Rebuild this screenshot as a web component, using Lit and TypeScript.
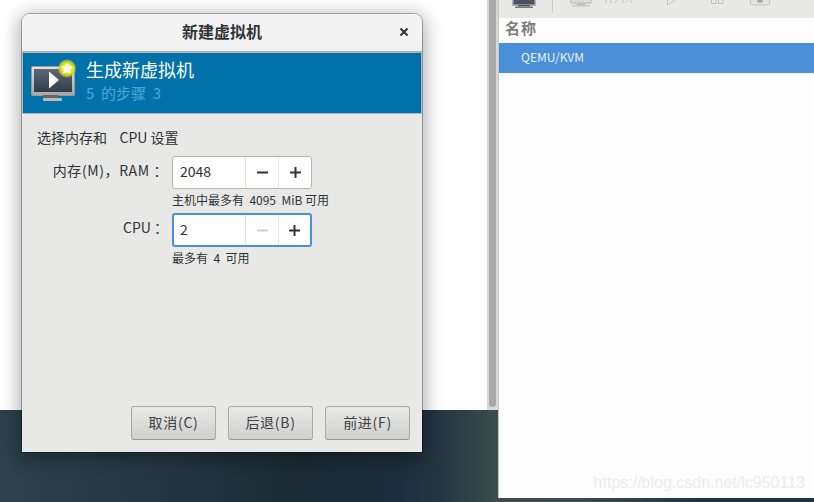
import { LitElement, html, css, svg } from "lit";
import { customElement } from "lit/decorators.js";

@customElement("app-root")
export class AppRoot extends LitElement {
  static styles = css`
    :host {
      display: block;
      position: relative;
      width: 814px;
      height: 502px;
      overflow: hidden;
      background: linear-gradient(90deg, #2c414b 0, #263842 140px, #1c2a33 300px, #1c2e3c 400px, #253640 440px, #3d4c4d 498px, #3a4c4e 580px, #1e3448 700px, #1e3448 814px);
      font-family: "Noto Sans CJK SC", "Noto Sans", sans-serif;
      color: #2e3436;
    }
    .backdrop {
      position: absolute;
      left: 0; top: 0;
      width: 487px; height: 410px;
      background: #fff;
    }
    .scroll {
      position: absolute;
      left: 487px; top: 0;
      width: 11px; height: 410px;
      background: #d8d8d6;
    }
    .thumb { position: absolute; left: 2px; top: 0; width: 7px; height: 407px; background: #a9a9a7; border-radius: 0 0 4px 4px; }
    .win {
      position: absolute;
      left: 498px; top: 0;
      width: 316px; height: 498px;
      background: #fdfdfd;
      border-left: 1px solid #c8c8c6;
      box-sizing: border-box;
      display: flex;
      flex-direction: column;
    }
    .toolbar {
      height: 18px;
      background: #e8e8e6;
      flex: none;
      position: relative;
      overflow: hidden;
    }
    .toolbar svg { position: absolute; left: 0; top: 0; }
    .colhead {
      height: 25px;
      flex: none;
      box-sizing: border-box;
      padding: 0 0 0 6px;
      font-weight: bold;
      font-size: 15px;
      line-height: 20px;
      color: #7d7d7d;
      letter-spacing: 1px;
    }
    .sel {
      height: 30px;
      flex: none;
      background: #4a90d9;
      color: #e8f0fa;
      font-size: 12px;
      line-height: 28px;
      padding-left: 22px;
    }
    .mark {
      position: absolute;
      right: 9px; top: 474px;
      font: 16px "Liberation Sans", sans-serif;
      color: #ececec;
    }
    .dialog {
      position: absolute;
      left: 22px; top: 14px;
      width: 400px; height: 438px;
      box-sizing: border-box;
      background: #e8e8e6;
      border-radius: 8px 8px 0 0;
      box-shadow: 0 0 0 1px rgba(0,0,0,.28), 0 4px 18px 3px rgba(0,0,0,.33);
      display: flex;
      flex-direction: column;
      overflow: hidden;
    }
    .title {
      height: 38px;
      flex: none;
      background: linear-gradient(#f5f5f5, #f1f1f1);
      border-bottom: 1px solid #b1b1af;
      box-sizing: border-box;
      display: flex;
      align-items: center;
      justify-content: center;
      position: relative;
      font-weight: bold;
      font-size: 16px;
      color: #2e3436;
      padding-bottom: 4px;
    }
    .close { position: absolute; left: 376px; top: 12px; width: 12px; height: 12px; }
    .banner {
      height: 62px;
      flex: none;
      background: #0072a9;
      border: 1px solid #a9b6bc;
      box-sizing: border-box;
      display: flex;
      padding: 4px 0 0 8px;
      gap: 10px;
    }
    .banner svg { flex: none; margin-top: 2px; }
    .b1 { font-size: 18px; line-height: 24px; color: #fff; }
    .b2 { font-size: 15px; line-height: 20px; color: #50a8d8; margin-top: 2px; }
    .body {
      flex: 1;
      padding: 13px 15px 0;
      display: flex;
      flex-direction: column;
      font-size: 14px;
      min-height: 0;
    }
    .lead { line-height: 20px; height: 29px; color: #2e3436; white-space: nowrap; }
    .grid {
      display: grid;
      grid-template-columns: 131px auto;
      column-gap: 4px;
      justify-content: start;
    }
    .lab { text-align: right; line-height: 28px; color: #2e3436; white-space: nowrap; }
    .lab.wide { letter-spacing: 0.6px; }
    .spin {
      width: 140px; height: 33px;
      box-sizing: border-box;
      background: #fff;
      border: 1px solid #b6b6b3;
      border-radius: 3px;
      display: flex;
    }
    .spin.focus { border: 2px solid #4a90d9; height: 34px; }
    .val { flex: 1; padding-left: 7px; line-height: 28px; font-size: 14px; color: #2e3436; }
    .spin.focus .val { padding-left: 6px; }
    .step {
      width: 33px;
      box-sizing: border-box;
      flex: none;
      border-left: 1px solid #e4e4e2;
      display: flex;
      align-items: center;
      justify-content: center;
    }
    .spin.focus .step:last-child { width: 32px; }
    .hint { grid-column: 2; font-size: 12px; height: 24px; line-height: 16px; padding-top: 3px; box-sizing: border-box; white-space: nowrap; color: #2e3436; }
    .actions {
      flex: none;
      height: 46px;
      display: flex;
      justify-content: flex-end;
      gap: 12px;
      padding-right: 12px;
    }
    .btn {
      width: 85px; height: 34px;
      box-sizing: border-box;
      border: 1px solid #a9a9a6;
      border-bottom-color: #959593;
      border-radius: 3px;
      background: linear-gradient(#e9e9e7, #cfcfcd);
      font-size: 14px;
      line-height: 28px;
      letter-spacing: 0.7px;
      text-align: center;
      color: #3c4244;
      padding: 0 0 2px;
      font-family: inherit;
    }
  `;

  private sign(plus: boolean, color: string) {
    return html`<svg width="11" height="11" viewBox="0 0 11 11">
      <rect x="0" y="4.5" width="11" height="2" fill="${color}"></rect>
      ${plus ? svg`<rect x="4.5" y="0" width="2" height="11" fill="${color}"></rect>` : ""}
    </svg>`;
  }

  render() {
    return html`
      <div class="backdrop"></div>
      <div class="scroll"><div class="thumb"></div></div>
      <div class="win">
        <div class="toolbar">
          <svg width="316" height="18" viewBox="499 0 316 18">
            <rect x="513" y="-6" width="22" height="11" fill="#4a5460" stroke="#9a9a98" stroke-width="1.5"></rect>
            <rect x="518" y="5" width="12" height="1.5" fill="#555"></rect>
            <rect x="515" y="6.5" width="18" height="1.5" fill="#777"></rect>
            <line x1="552.5" y1="0" x2="552.5" y2="13" stroke="#c9c9c7"></line>
            <rect x="571" y="-6" width="20" height="9" fill="#dcdcda" stroke="#c4c4c2" stroke-width="1.5"></rect>
            <rect x="577" y="3.5" width="8" height="1.5" fill="#bbb"></rect>
            <rect x="572" y="5" width="18" height="1.5" fill="#c8c8c6"></rect>
            <path d="M606 0v3M611 0v3M617 0l-2 3M623 0v3M628 0l-3 3M631 0v3" stroke="#c4c4c2" stroke-width="1" fill="none"></path>
            <path d="M667.5 0v5l8-5" stroke="#c2c2c0" fill="none"></path>
            <path d="M711.5 0v3.5h4.5V0M718.5 0v3.5h4.5V0" stroke="#bdbdbb" fill="none"></path>
            <rect x="750.5" y="-5" width="19" height="10" rx="1" fill="#e2e2e0" stroke="#c6c6c4"></rect>
            <path d="M757 0a3 3 0 0 0 6 0z" fill="#aaa"></path>
          </svg>
        </div>
        <div class="colhead">名称</div>
        <div class="sel">QEMU/KVM</div>
        <div class="mark">https://blog.csdn.net/lc950113</div>
      </div>

      <div class="dialog">
        <div class="title">新建虚拟机
          <svg class="close" viewBox="0 0 12 12"><path d="M2.5 2.5l7 7M9.5 2.5l-7 7" stroke="#2e3436" stroke-width="2"></path></svg>
        </div>
        <div class="banner">
          <svg width="45" height="42" viewBox="0 0 45 42">
            <defs>
              <linearGradient id="scr" x1="0" y1="0" x2="0" y2="1"><stop offset="0" stop-color="#5b6878"></stop><stop offset="1" stop-color="#333c48"></stop></linearGradient>
              <linearGradient id="bez" x1="0" y1="0" x2="0" y2="1"><stop offset="0" stop-color="#e2e2e0"></stop><stop offset="1" stop-color="#a5a5a3"></stop></linearGradient>
              <radialGradient id="glow"><stop offset="0.45" stop-color="#f2f23c"></stop><stop offset="0.8" stop-color="#c8d020" stop-opacity=".85"></stop><stop offset="1" stop-color="#c8d020" stop-opacity="0"></stop></radialGradient>
            </defs>
            <rect x="0.5" y="7.5" width="43" height="29" rx="1" fill="url(#bez)" stroke="#9a9a98"></rect>
            <rect x="3" y="10" width="38" height="23" fill="url(#scr)"></rect>
            <rect x="12" y="36" width="15" height="3" fill="#666"></rect>
            <rect x="12" y="39" width="19" height="3" rx="1" fill="#b9b9b7"></rect>
            <path d="M18 12.5l10 8.5-10 8.5z" fill="#fff"></path>
            <circle cx="36" cy="9.5" r="9.5" fill="url(#glow)"></circle>
            <path d="M36 3.5l1.8 3.8 4.2.5-3.1 2.8.9 4.1-3.8-2.1-3.8 2.1.9-4.1-3.1-2.8 4.2-.5z" fill="#fffde8"></path>
          </svg>
          <div>
            <div class="b1">生成新虚拟机</div>
            <div class="b2">5&nbsp; 的步骤&nbsp; 3</div>
          </div>
        </div>
        <div class="body">
          <div class="lead">选择内存和&nbsp;&nbsp;&nbsp; CPU 设置</div>
          <div class="grid">
            <div class="lab wide">内存(M)，RAM ：</div>
            <div class="spin">
              <div class="val">2048</div>
              <div class="step">${this.sign(false, "#2e3436")}</div>
              <div class="step">${this.sign(true, "#2e3436")}</div>
            </div>
            <div class="hint">主机中最多有&nbsp; 4095&nbsp; MiB 可用</div>
            <div class="lab">CPU ：</div>
            <div class="spin focus">
              <div class="val">2</div>
              <div class="step">${this.sign(false, "#d0d0ce")}</div>
              <div class="step">${this.sign(true, "#2e3436")}</div>
            </div>
            <div class="hint">最多有&nbsp; 4&nbsp; 可用</div>
          </div>
        </div>
        <div class="actions">
          <button class="btn">取消(C)</button>
          <button class="btn">后退(B)</button>
          <button class="btn">前进(F)</button>
        </div>
      </div>
    `;
  }
}
